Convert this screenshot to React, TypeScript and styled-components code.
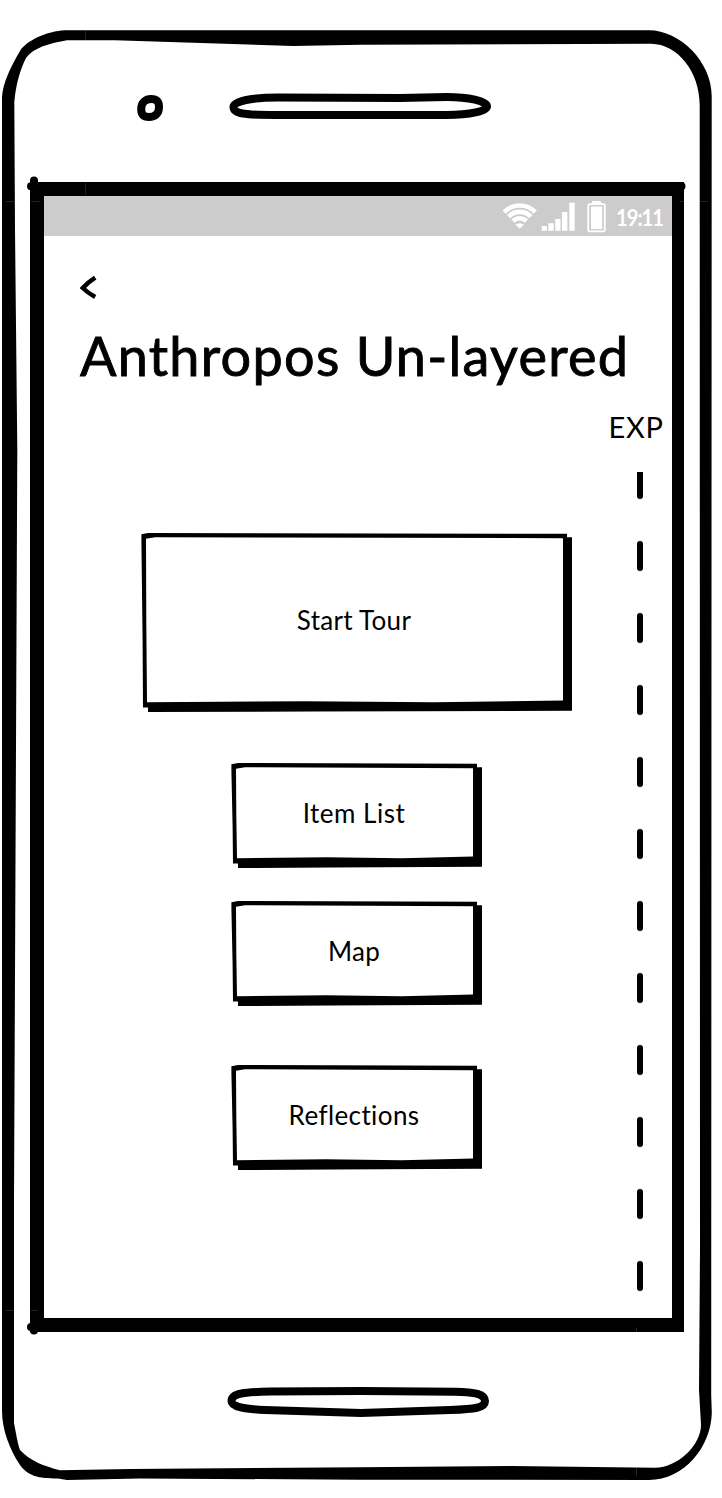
import React from 'react';
import styled, { createGlobalStyle } from 'styled-components';

const GlobalStyle = createGlobalStyle`
  * { box-sizing: border-box; }
  body { margin: 0; background: #fff; color: #000; font-family: Lato, "Open Sans", sans-serif; }
`;

const Phone = styled.div`
  position: relative;
  width: 722px;
  height: 1498px;
  display: flex;
  flex-direction: column;
  overflow: hidden;
`;

const Outline = styled.svg`
  position: absolute;
  inset: 0;
  pointer-events: none;
`;

const TopBezel = styled.div`
  height: 182px;
  padding: 92px 0 0 135px;
  display: flex;
  align-items: flex-start;
  gap: 64px;
`;

const BottomBezel = styled.div`
  padding: 54px 0 0 225px;
`;

const Drawing = styled.svg`
  display: block;
  flex: none;
`;

const Screen = styled.main`
  width: 654px;
  height: 1150px;
  margin-left: 30px;
  border: 14px solid #000;
  border-right-width: 12px;
  background: #fff;
`;

const StatusBar = styled.div`
  height: 40px;
  background: #ccc;
  color: #fff;
  display: flex;
  justify-content: flex-end;
  padding-right: 8px;
`;

const Clock = styled.span`
  width: 48px;
  margin-left: 8px;
  font-size: 23.5px;
  line-height: 42px;
  font-weight: 700;
  letter-spacing: -1.2px;
  white-space: nowrap;
  transform: scaleX(0.86);
  transform-origin: left center;
`;

const Header = styled.header`
  height: 174px;
  padding: 38px 0 0 36px;
`;

const BackButton = styled.button`
  display: block;
  padding: 0;
  border: 0;
  background: none;
`;

const Title = styled.h1`
  margin: 20px 0 0;
  font-size: 54px;
  line-height: 72px;
  font-weight: 400;
  letter-spacing: 1.27px;
  white-space: nowrap;
  -webkit-text-stroke: 0.9px #000;
`;

const Content = styled.div`
  display: flex;
`;

const Menu = styled.nav`
  width: 556px;
  padding: 123px 0 0 69px;
  display: flex;
  flex-direction: column;
  align-items: center;
`;

const SketchButton = styled.button<{ $w: number; $h: number; $gap: number }>`
  position: relative;
  width: ${p => p.$w}px;
  height: ${p => p.$h}px;
  margin: 0 0 ${p => p.$gap}px;
  padding: 0 5px 6px 0;
  border: 0;
  background: none;
  color: #000;
  font: 400 26px/32px Lato, "Open Sans", sans-serif;
`;

const ButtonEdge = styled.svg`
  position: absolute;
  inset: 0;
`;

const ButtonText = styled.span<{ $spacing: number }>`
  position: relative;
  letter-spacing: ${p => p.$spacing}px;
`;

const Progress = styled.aside`
  width: 72px;
  display: flex;
  flex-direction: column;
  align-items: center;
`;

const ProgressLabel = styled.span`
  font-size: 29px;
  line-height: 34px;
  height: 62px;
  letter-spacing: 0.7px;
`;

const Dashes = styled.div`
  display: flex;
  flex-direction: column;
  gap: 42px;
  margin-left: 8px;
`;

const Dash = styled.i<{ $first: boolean }>`
  width: 6px;
  height: ${p => (p.$first ? 27 : 30)}px;
  background: #000;
  border-radius: ${p => (p.$first ? '0 0 3px 3px' : '3px')};
`;

function MenuButton({ label, w, h, gap, spacing }: { label: string; w: number; h: number; gap: number; spacing: number }) {
  return (
    <SketchButton $w={w} $h={h} $gap={gap}>
      <ButtonEdge width={w} height={h}>
        <path
          d={`M0.4 1.3L7 0L${w - 5} 0.8V4.3H${w}V${h - 1.2}L${w * 0.4} ${h - 0.5}L7 ${h}V${h - 4.6}H2L1.6 ${h * 0.6}L0.4 8Z`}
        />
        <path
          fill="#fff"
          d={`M5 5.8L14 4.3L${w - 9} 5.2V${h - 11.4}L${w * 0.68} ${h - 9.8}L${w * 0.38} ${h - 10.7}L6 ${h - 9.7}L5.3 ${h * 0.5}Z`}
        />
      </ButtonEdge>
      <ButtonText $spacing={spacing}>{label}</ButtonText>
    </SketchButton>
  );
}

const items = [
  { label: 'Start Tour', w: 431, h: 179, gap: 51, spacing: 0.3 },
  { label: 'Item List', w: 251, h: 105, gap: 33, spacing: 0.5 },
  { label: 'Map', w: 251, h: 105, gap: 59, spacing: 0.3 },
  { label: 'Reflections', w: 251, h: 105, gap: 0, spacing: 0.4 },
];

export default function App() {
  return (
    <>
      <GlobalStyle />
      <Phone>
        <TopBezel>
          <Drawing width="30" height="32" viewBox="135 92 30 32" fill="none" stroke="#000" strokeWidth="8">
            <path d="M141.2 109C141.2 102 146 99 151 99C157 99 159 102 159 107C159 114 155 117 149 117C144 117 141.2 115 141.2 109Z" />
          </Drawing>
          <Drawing width="264" height="32" viewBox="229 92 264 32" fill="none" stroke="#000" strokeWidth="8">
            <path d="M233.5 107C233.5 101 252 97.5 278 97.5L400 98L447 97C468 97 487 101 487 106.5C487 111 470 115 447 115H275C245 115 233.5 114 233.5 107Z" />
          </Drawing>
        </TopBezel>

        <Screen>
          <StatusBar>
            <Drawing width="110" height="40" viewBox="498 196 110 40">
              <g fill="none" stroke="#fff" strokeWidth="4.6">
                <path d="M504.1 212.1A21.8 21.8 0 0 1 535.3 212.1" />
                <path d="M508.6 216.6A15.5 15.5 0 0 1 530.8 216.6" />
                <path d="M513 221.1A9.3 9.3 0 0 1 526.4 221.1" />
              </g>
              <path fill="#fff" d="M515.4 224.7Q519.7 221.6 524 224.7L519.7 228.6Z" />
              <path
                fill="#fff"
                d="M541.7 226h5.2v4.8h-5.2zM548.4 223.3h5.3v7.5h-5.3zM555.3 219h5.2v11.8h-5.2zM562 212h5.4v18.8H562zM569.3 202.8h5.4v28h-5.4z"
              />
              <rect x="588.2" y="204.2" width="16.6" height="27.2" rx="1.5" fill="none" stroke="#fff" strokeWidth="1.8" />
              <path d="M592 204.5V202Q592 201 593 201H600Q601 201 601 202V204.5Z" fill="#fff" />
              <rect x="591" y="206.5" width="11.2" height="22.6" fill="#fff" />
            </Drawing>
            <Clock>19:11</Clock>
          </StatusBar>
          <Header>
            <BackButton aria-label="Back">
              <Drawing width="18" height="26" viewBox="80 274 18 26" fill="none" stroke="#000" strokeWidth="4.5">
                <path d="M95.2 277.6Q87.5 282.5 82.8 288Q88 293 95.2 297" />
              </Drawing>
            </BackButton>
            <Title>Anthropos Un-layered</Title>
          </Header>
          <Content>
            <Menu>
              {items.map(item => (
                <MenuButton key={item.label} {...item} />
              ))}
            </Menu>
            <Progress>
              <ProgressLabel>EXP</ProgressLabel>
              <Dashes>
                {Array.from({ length: 12 }, (_, i) => (
                  <Dash key={i} $first={i === 0} />
                ))}
              </Dashes>
            </Progress>
          </Content>
        </Screen>

        <BottomBezel>
          <Drawing width="266" height="34" viewBox="225 1386 266 34" fill="none" stroke="#000" strokeWidth="8">
            <path d="M231.5 1401C231.5 1393 245 1392 270 1391.6L361 1391L455 1391.7C475 1392 485 1394 485 1401C485 1408 475 1409 450 1410L361 1413L265 1410C245 1409 231.5 1407 231.5 1401Z" />
          </Drawing>
        </BottomBezel>

        <Outline width="722" height="1498">
          <path
            fillRule="evenodd"
            d="M2 97C3 83 10 68 20 51C26 41 47 31 65 30.3H649C680 30.3 711.7 62 711.7 96L711.2 1395L711.8 1413C711 1447 684 1480 649 1480L361 1479.7L140 1478.5L67 1480L58 1478.5C38 1478.5 28 1476 20 1465C10 1450 2 1430 2 1411Z
            M14.3 102C16 84 20 70 26 58C33 48 50 43 67 40.3H115L293 46L361 44.7L651 43.7C678 44 699.7 72 699.7 105L700 1250L699 1390L701 1425C701 1445 678 1467.7 655 1467.7L511 1466L361 1467.3L130 1469L60 1470.3C44 1466 30 1461 20 1450C17.5 1443 16 1433 14 1423V1200L17.3 450L15 230Z"
          />
          <g stroke="#000" strokeWidth="8" strokeLinecap="round">
            <path d="M34 180.5V190M31 186.3H40M31 1327H40M34 1320V1330.5M670 186.3H681.5" />
          </g>
          <path d="M85.5 31V40M85.5 183V195M6 201.5H14M31 201.5H40M680 201.5H684M700 201.5H708M6 1310.5H14M31 1310.5H38M636.5 1328V1332M636.5 1468V1476" stroke="#222" />
        </Outline>
      </Phone>
    </>
  );
}
